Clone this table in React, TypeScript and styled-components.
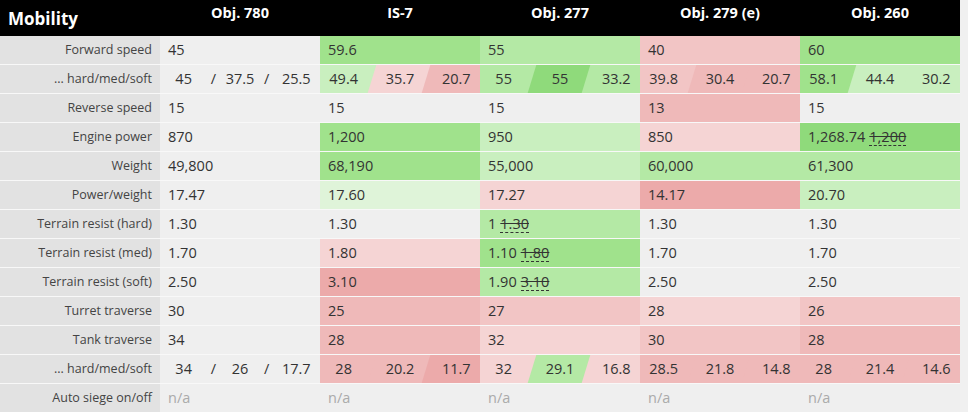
import styled, { createGlobalStyle } from "styled-components";

const GlobalStyle = createGlobalStyle`
  html, body {
    margin: 0;
    padding: 0;
    background: #f0f0f0;
    overflow: hidden;
  }
  body {
    font-family: "Open Sans", "Noto Sans", sans-serif;
    color: #333;
  }
`;

// cell fills
const C = {
  g0: "#8fda7b",
  g1: "#a0e28c",
  g2: "#b4e9a5",
  g3: "#c9efbf",
  g4: "#dff4d9",
  r1: "#ecaaaa",
  r2: "#efb9b9",
  r3: "#f2c5c5",
  r4: "#f5d4d4",
};

type Seg = { text: string; bg?: string };
type Cell = {
  text?: string;
  old?: string;
  bg?: string;
  na?: boolean;
  split?: Seg[];
  slashes?: boolean;
};
type RowData = { label: string; cells: Cell[] };

const tanks = ["Obj. 780", "IS-7", "Obj. 277", "Obj. 279 (e)", "Obj. 260"];

const rows: RowData[] = [
  {
    label: "Forward speed",
    cells: [
      { text: "45" },
      { text: "59.6", bg: C.g1 },
      { text: "55", bg: C.g2 },
      { text: "40", bg: C.r3 },
      { text: "60", bg: C.g1 },
    ],
  },
  {
    label: "... hard/med/soft",
    cells: [
      { slashes: true, split: [{ text: "45" }, { text: "37.5" }, { text: "25.5" }] },
      { split: [{ text: "49.4", bg: C.g3 }, { text: "35.7", bg: C.r4 }, { text: "20.7", bg: C.r2 }] },
      { split: [{ text: "55", bg: C.g2 }, { text: "55", bg: C.g0 }, { text: "33.2", bg: C.g2 }] },
      { split: [{ text: "39.8", bg: C.r3 }, { text: "30.4", bg: C.r2 }, { text: "20.7", bg: C.r2 }] },
      { split: [{ text: "58.1", bg: C.g1 }, { text: "44.4", bg: C.g3 }, { text: "30.2", bg: C.g3 }] },
    ],
  },
  {
    label: "Reverse speed",
    cells: [{ text: "15" }, { text: "15" }, { text: "15" }, { text: "13", bg: C.r2 }, { text: "15" }],
  },
  {
    label: "Engine power",
    cells: [
      { text: "870" },
      { text: "1,200", bg: C.g1 },
      { text: "950", bg: C.g3 },
      { text: "850", bg: C.r4 },
      { text: "1,268.74", old: "1,200", bg: C.g0 },
    ],
  },
  {
    label: "Weight",
    cells: [
      { text: "49,800" },
      { text: "68,190", bg: C.g1 },
      { text: "55,000", bg: C.g3 },
      { text: "60,000", bg: C.g2 },
      { text: "61,300", bg: C.g2 },
    ],
  },
  {
    label: "Power/weight",
    cells: [
      { text: "17.47" },
      { text: "17.60", bg: C.g4 },
      { text: "17.27", bg: C.r4 },
      { text: "14.17", bg: C.r1 },
      { text: "20.70", bg: C.g3 },
    ],
  },
  {
    label: "Terrain resist (hard)",
    cells: [{ text: "1.30" }, { text: "1.30" }, { text: "1", old: "1.30", bg: C.g2 }, { text: "1.30" }, { text: "1.30" }],
  },
  {
    label: "Terrain resist (med)",
    cells: [
      { text: "1.70" },
      { text: "1.80", bg: C.r4 },
      { text: "1.10", old: "1.80", bg: C.g1 },
      { text: "1.70" },
      { text: "1.70" },
    ],
  },
  {
    label: "Terrain resist (soft)",
    cells: [
      { text: "2.50" },
      { text: "3.10", bg: C.r1 },
      { text: "1.90", old: "3.10", bg: C.g2 },
      { text: "2.50" },
      { text: "2.50" },
    ],
  },
  {
    label: "Turret traverse",
    cells: [
      { text: "30" },
      { text: "25", bg: C.r2 },
      { text: "27", bg: C.r3 },
      { text: "28", bg: C.r4 },
      { text: "26", bg: C.r3 },
    ],
  },
  {
    label: "Tank traverse",
    cells: [
      { text: "34" },
      { text: "28", bg: C.r2 },
      { text: "32", bg: C.r4 },
      { text: "30", bg: C.r3 },
      { text: "28", bg: C.r2 },
    ],
  },
  {
    label: "... hard/med/soft",
    cells: [
      { slashes: true, split: [{ text: "34" }, { text: "26" }, { text: "17.7" }] },
      { split: [{ text: "28", bg: C.r2 }, { text: "20.2", bg: C.r2 }, { text: "11.7", bg: C.r1 }] },
      { split: [{ text: "32", bg: C.r4 }, { text: "29.1", bg: C.g2 }, { text: "16.8", bg: C.r4 }] },
      { split: [{ text: "28.5", bg: C.r2 }, { text: "21.8", bg: C.r2 }, { text: "14.8", bg: C.r2 }] },
      { split: [{ text: "28", bg: C.r2 }, { text: "21.4", bg: C.r2 }, { text: "14.6", bg: C.r2 }] },
    ],
  },
  {
    label: "Auto siege on/off",
    cells: tanks.map(() => ({ text: "n/a", na: true })),
  },
];

const App = () => {
  return (
    <>
      <GlobalStyle />
      <Table>
        <HeadRow>
          <Title>Mobility</Title>
          {tanks.map((t) => (
            <TankName key={t}>{t}</TankName>
          ))}
        </HeadRow>
        {rows.map((r, i) => (
          <Row key={i}>
            <Label>{r.label}</Label>
            {r.cells.map((c, j) =>
              c.split ? (
                <SplitCell key={j}>
                  {c.split.map((s, k) => (
                    <Segment key={k} $pos={k} $bg={s.bg} $slash={!!c.slashes && k < 2}>
                      {s.text}
                    </Segment>
                  ))}
                </SplitCell>
              ) : (
                <Value key={j} $bg={c.bg} $na={c.na}>
                  {c.text}
                  {c.old && <Old>{c.old}</Old>}
                </Value>
              )
            )}
          </Row>
        ))}
      </Table>
    </>
  );
};

export default App;

const Table = styled.div`
  width: 960px;
  display: flex;
  flex-direction: column;
`;
const HeadRow = styled.div`
  height: 36px;
  display: grid;
  grid-template-columns: repeat(6, 160px);
  background: #000;
  color: #fff;
`;
const Title = styled.div`
  font-size: 17px;
  font-weight: 700;
  padding-left: 8px;
  display: flex;
  align-items: center;
  padding-top: 1px;
`;
const TankName = styled.div`
  font-size: 14.5px;
  font-weight: 700;
  text-align: center;
  padding-top: 3px;
  line-height: 20px;
`;
const Row = styled.div`
  height: 28px;
  display: grid;
  grid-template-columns: repeat(6, 160px);
  background: #efefef;
  border-bottom: 1px solid rgba(255, 255, 255, 0.55);
`;
const Label = styled.div`
  background: #e2e2e2;
  color: #444;
  font-size: 12.5px;
  text-align: right;
  padding-right: 8px;
  line-height: 28px;
  white-space: nowrap;
`;
const Value = styled.div<{ $bg?: string; $na?: boolean }>`
  background: ${(p) => p.$bg || "transparent"};
  color: ${(p) => (p.$na ? "#aaa" : "#333")};
  font-size: 14.5px;
  padding-left: 8px;
  line-height: 28px;
  white-space: nowrap;
`;
const Old = styled.span`
  margin-left: 4px;
  text-decoration: line-through;
  border-bottom: 1px dashed #333;
  line-height: 16px;
  display: inline-block;
`;
const SplitCell = styled.div`
  display: grid;
  grid-template-columns: repeat(3, 1fr);
  overflow: hidden;
  font-size: 14.5px;
  line-height: 28px;
`;
const Segment = styled.div<{ $pos: number; $bg?: string; $slash: boolean }>`
  position: relative;
  text-align: center;
  padding-right: ${(p) => (p.$pos === 0 ? "6px" : "0")};
  padding-left: ${(p) => (p.$pos === 2 ? "6px" : "0")};
  z-index: 0;

  /* skewed fill, overlapping its neighbours a little so no seam shows */
  &::before {
    content: "";
    position: absolute;
    top: 0;
    bottom: 0;
    left: ${(p) => (p.$pos === 0 ? "-12px" : "-1px")};
    right: ${(p) => (p.$pos === 2 ? "-12px" : "-1px")};
    background: ${(p) => p.$bg || "transparent"};
    transform: skewX(-17deg);
    z-index: ${(p) => (p.$pos === 1 ? -1 : -2)};
  }

  &::after {
    content: ${(p) => (p.$slash ? '"/"' : "none")};
    position: absolute;
    right: 0;
    transform: translateX(50%);
    color: #333;
  }
`;
